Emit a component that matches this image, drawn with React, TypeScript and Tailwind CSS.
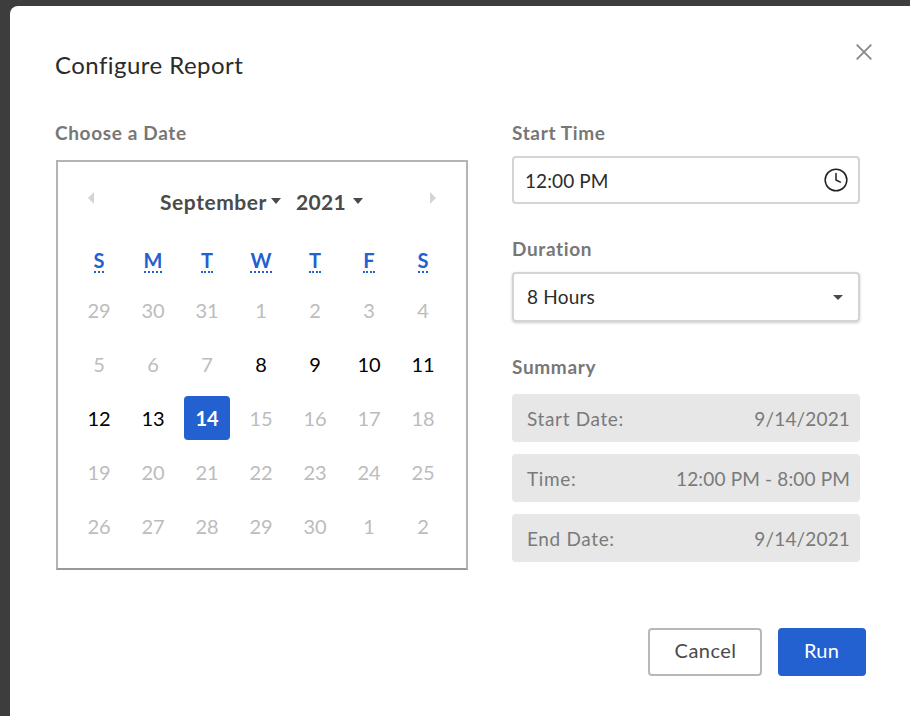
import { Clock } from 'lucide-react';

const weekdays = [
  { short: 'S', title: 'Sunday' },
  { short: 'M', title: 'Monday' },
  { short: 'T', title: 'Tuesday' },
  { short: 'W', title: 'Wednesday' },
  { short: 'T', title: 'Thursday' },
  { short: 'F', title: 'Friday' },
  { short: 'S', title: 'Saturday' },
];

const days = [
  29, 30, 31, 1, 2, 3, 4,
  5, 6, 7, 8, 9, 10, 11,
  12, 13, 14, 15, 16, 17, 18,
  19, 20, 21, 22, 23, 24, 25,
  26, 27, 28, 29, 30, 1, 2,
];

const summary = [
  { label: 'Start Date:', value: '9/14/2021' },
  { label: 'Time:', value: '12:00 PM - 8:00 PM' },
  { label: 'End Date:', value: '9/14/2021' },
];

function Caret({ gap }: { gap: string }) {
  return <span className={`${gap} mb-[3px] w-0 h-0 border-x-[5.5px] border-x-transparent border-t-[6px] border-t-[#4a4a4a]`} />;
}

function Calendar() {
  return (
    <div className="w-[412px] h-[410px] border-2 border-[#b4b4b4] border-b-[#999999] px-[14px]">
      <div className="flex items-center h-[28px] mt-[26px] relative">
        <span className="absolute left-[16px] top-[4px] w-0 h-0 border-y-[6px] border-y-transparent border-r-[6px] border-r-[#d4d4d4]" />
        <div className="ml-[88px] flex items-center text-[21px] font-bold text-[#4a4a4a] tracking-[0.55px]">
          September
          <Caret gap="ml-[4px]" />
        </div>
        <div className="ml-[15px] flex items-center text-[21px] font-bold text-[#4a4a4a] tracking-[0.3px]">
          2021
          <Caret gap="ml-[7px]" />
        </div>
        <span className="absolute left-[358px] top-[4px] w-0 h-0 border-y-[6px] border-y-transparent border-l-[6px] border-l-[#d4d4d4]" />
      </div>
      <div className="grid grid-cols-[repeat(7,54px)] mt-[29px]">
        {weekdays.map((d) => (
          <div key={d.title} className="h-[38px] flex justify-center pt-[3px]">
            <abbr title={d.title} className="h-[25px] text-[20px] leading-[24px] font-bold text-[#2360d0] no-underline border-b-2 border-dotted border-[#2360d0]">
              {d.short}
            </abbr>
          </div>
        ))}
        {days.map((d, i) => {
          const active = i >= 10 && i <= 15;
          const selected = i === 16;
          return (
            <div key={i} className="h-[54px] flex items-center justify-center">
              <span
                className={
                  selected
                    ? 'w-[46px] h-[44px] rounded-[4px] bg-[#2360d0] text-white font-bold flex items-center justify-center text-[20px]'
                    : active
                      ? 'text-[20px] text-black'
                      : 'text-[20px] text-[#bcbcbc]'
                }
              >
                {d}
              </span>
            </div>
          );
        })}
      </div>
    </div>
  );
}

export default function App() {
  return (
    <div className="w-[910px] h-[716px] overflow-hidden bg-[#3d3d3d] pt-[6px] pl-[10px] font-['Lato',sans-serif]">
      <div className="relative w-[960px] h-[760px] bg-white rounded-[8px] pl-[45px] pt-[43px]">
        <button className="absolute left-[846px] top-[38px] text-[#8a8a8a]">
          <svg width="16" height="16" viewBox="0 0 16 16" fill="none" stroke="currentColor" strokeWidth="1.9" className="block">
            <path d="M0.7 0.7l14.6 14.6M15.3 0.7L0.7 15.3" />
          </svg>
        </button>
        <h1 className="text-[24px] leading-[32px] text-[#2b2b2b] tracking-[0.45px]">Configure Report</h1>
        <div className="flex mt-[40px]">
          <div className="w-[457px]">
            <div className="text-[19px] leading-[24px] font-bold text-[#777777] tracking-[0.65px]">Choose a Date</div>
            <div className="mt-[15px] ml-[1px]">
              <Calendar />
            </div>
          </div>
          <div className="w-[348px]">
            <div className="text-[19px] leading-[24px] font-bold text-[#777777] tracking-[0.65px]">Start Time</div>
            <div className="mt-[11px] h-[48px] flex items-center justify-between rounded-[4px] border-2 border-[#d4d4d4] pl-[11px] pr-[9px] text-[19px] text-[#2b2b2b]">
              <span className="pt-[2px] tracking-[0.1px]">12:00 PM</span>
              <Clock size={26} strokeWidth={1.4} className="text-[#222222]" />
            </div>
            <div className="mt-[33px] text-[19px] leading-[24px] font-bold text-[#777777] tracking-[0.65px]">Duration</div>
            <div className="mt-[11px] h-[50px] flex items-center justify-between rounded-[4px] border-2 border-[#d4d4d4] pl-[13px] pr-[15px] text-[19px] text-[#2b2b2b] shadow-[0_1px_3px_rgba(0,0,0,0.2)]">
              <span className="tracking-[0.2px]">8 Hours</span>
              <span className="w-0 h-0 border-x-[5px] border-x-transparent border-t-[5px] border-t-[#4a4a4a]" />
            </div>
            <div className="mt-[33px] text-[19px] leading-[24px] font-bold text-[#777777] tracking-[0.65px]">Summary</div>
            <div className="mt-[15px] flex flex-col gap-[12px]">
              {summary.map((row) => (
                <div key={row.label} className="h-[48px] pt-[2px] flex items-center justify-between rounded-[4px] bg-[#e7e7e7] pl-[15px] pr-[10px] text-[19px] text-[#7a7a7a]">
                  <span className="tracking-[0.65px]">{row.label}</span>
                  <span className="tracking-[0.15px]">{row.value}</span>
                </div>
              ))}
            </div>
          </div>
        </div>
        <div className="absolute left-[638px] top-[622px] flex gap-[16px]">
          <button className="w-[114px] h-[48px] pb-[4px] pl-[1px] rounded-[4px] border-2 border-[#b8b8b8] bg-white text-[20px] text-[#4a4a4a] tracking-[0.45px]">Cancel</button>
          <button className="w-[88px] h-[48px] pb-[4px] pr-[1px] rounded-[4px] bg-[#2360d0] text-[20px] text-white tracking-[0.2px]">Run</button>
        </div>
      </div>
    </div>
  );
}
